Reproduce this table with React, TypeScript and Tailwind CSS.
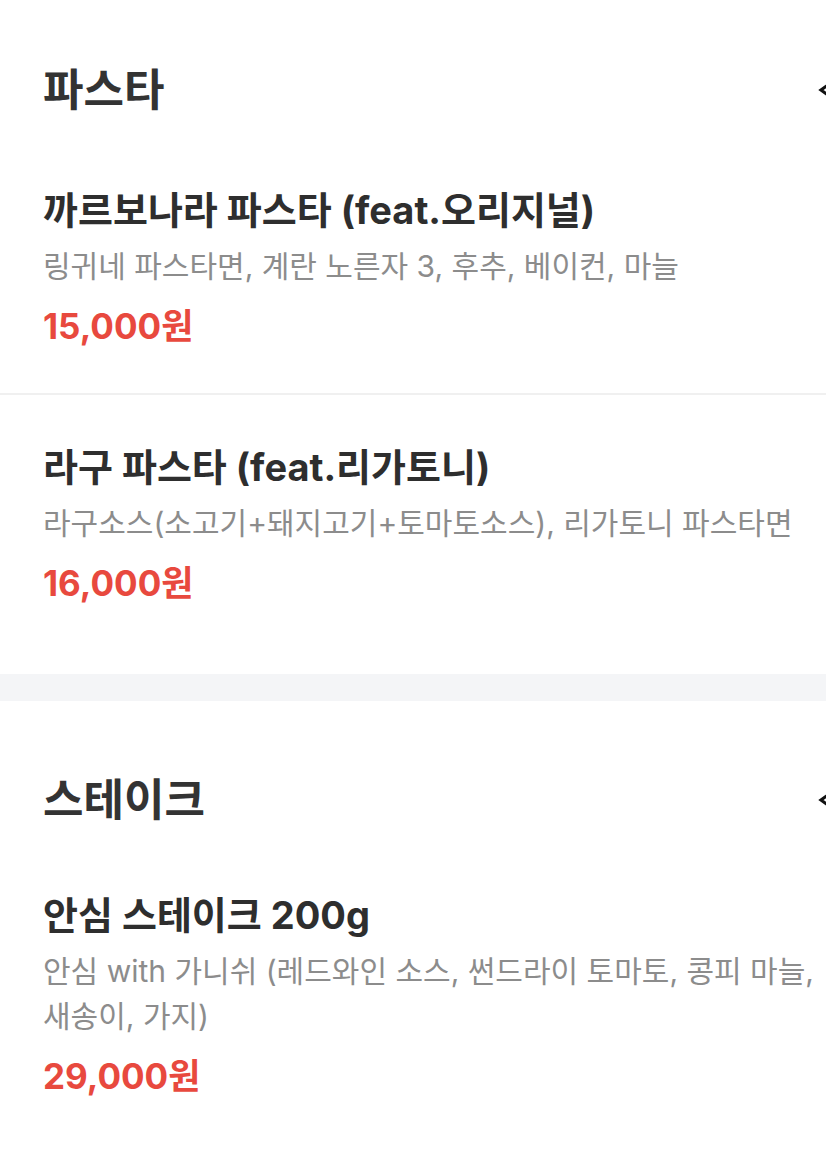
import React from "react";

const font = { fontFamily: '"Inter", "Noto Sans CJK KR", sans-serif' };

function Chevron() {
  return (
    <svg width="20" height="20" viewBox="0 0 20 20" fill="none" className="shrink-0">
      <path d="M14 2 L3 10 L14 18" stroke="#111" strokeWidth="3.2" strokeLinejoin="miter" strokeLinecap="butt" />
    </svg>
  );
}

type Item = { title: string; desc: React.ReactNode; price: string };

function MenuItem({ item, divider }: { item: Item; divider?: boolean }) {
  return (
    <div
      className={`flex flex-col pl-[43px] pt-[48px] ${divider ? "pb-[45px] border-b-2 border-[#f0f0f0]" : ""}`}
    >
      <div className="text-[38px] leading-[48px] font-bold text-[#2e2e2e] whitespace-nowrap">
        {item.title}
      </div>
      <div className="mt-[10px] text-[30px] leading-[45px] text-[#8c8c8c] whitespace-nowrap">
        {item.desc}
      </div>
      <div className="mt-[15px] text-[35px] leading-[44px] font-bold text-[#e8493e]">
        {item.price}
      </div>
    </div>
  );
}

function Header({ title, gap }: { title: string; gap: string }) {
  return (
    <div className={`flex items-center justify-between pl-[43px] pr-[32px] ${gap}`}>
      <h2 className="text-[44px] leading-[56px] font-bold text-[#333]">{title}</h2>
      <Chevron />
    </div>
  );
}

export default function App() {
  return (
    <div className="w-full overflow-hidden bg-white" style={font}>
      <div className="flex w-[870px] flex-col">
        <section className="flex flex-col pt-[62px] pb-[69px]">
          <Header title="파스타" gap="pb-[20px]" />
          <MenuItem
            divider
            item={{
              title: "까르보나라 파스타 (feat.오리지널)",
              desc: "링귀네 파스타면, 계란 노른자 3, 후추, 베이컨, 마늘",
              price: "15,000원",
            }}
          />
          <MenuItem
            item={{
              title: "라구 파스타 (feat.리가토니)",
              desc: "라구소스(소고기+돼지고기+토마토소스), 리가토니 파스타면",
              price: "16,000원",
            }}
          />
        </section>
        <div className="h-[27px] bg-[#f4f5f7]" />
        <section className="flex flex-col pt-[71px] pb-[60px]">
          <Header title="스테이크" gap="pb-[15px]" />
          <MenuItem
            item={{
              title: "안심 스테이크 200g",
              desc: (
                <>
                  안심 with 가니쉬 (레드와인 소스, 썬드라이 토마토, 콩피 마늘,
                  <br />
                  새송이, 가지)
                </>
              ),
              price: "29,000원",
            }}
          />
        </section>
      </div>
    </div>
  );
}
